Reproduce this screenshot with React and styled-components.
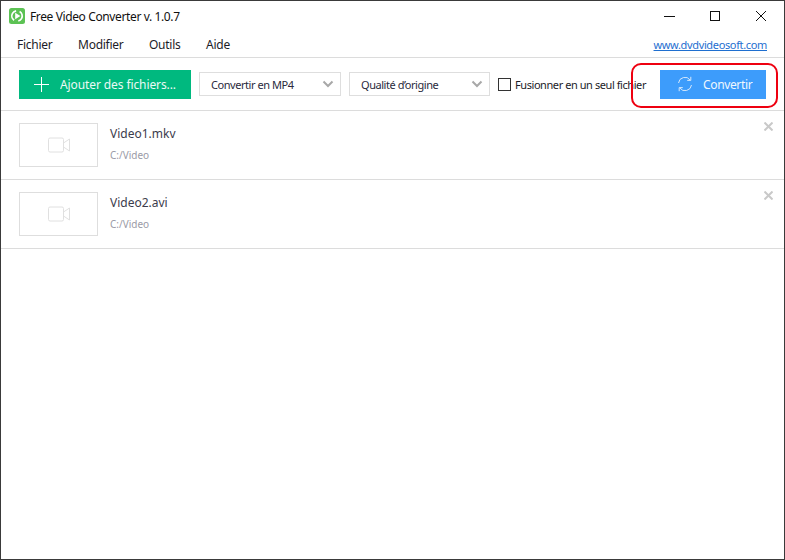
import React from 'react';
import styled, { createGlobalStyle } from 'styled-components';

const GlobalStyle = createGlobalStyle`
  html, body {
    margin: 0;
    padding: 0;
    background: #fff;
  }
  body {
    font-family: "Noto Sans", "Open Sans", sans-serif;
  }
`;

const Window = styled.div`
  position: relative;
  box-sizing: border-box;
  width: 785px;
  height: 560px;
  border: 1px solid #3a3a3a;
  background: #fff;
  overflow: hidden;
`;

const TitleBar = styled.div`
  display: flex;
  align-items: center;
  height: 30px;
  padding-left: 8px;
`;

const AppName = styled.span`
  margin-left: 5px;
  font-size: 12px;
  letter-spacing: -0.38px;
  color: #111;
`;

const WindowButtons = styled.div`
  display: flex;
  margin-left: auto;
`;

const WindowButton = styled.div`
  display: flex;
  align-items: center;
  justify-content: center;
  width: 46px;
  height: 30px;
`;

const MenuBar = styled.div`
  display: flex;
  align-items: center;
  height: 26px;
  padding: 0 17px 0 16px;
  border-bottom: 1px solid #dcdcdc;
`;

const MenuItem = styled.span`
  width: ${p => p.$width}px;
  font-size: 12px;
  letter-spacing: -0.25px;
  color: #1c1c28;
`;

const SiteLink = styled.a`
  margin-left: auto;
  font-size: 11px;
  letter-spacing: -0.35px;
  color: #1f6fd0;
  text-decoration: underline;
`;

const Toolbar = styled.div`
  display: flex;
  align-items: center;
  height: 52px;
  padding: 0 18px;
  border-bottom: 1px solid #dcdcdc;
`;

const ActionButton = styled.div`
  display: flex;
  align-items: center;
  box-sizing: border-box;
  width: ${p => p.$width}px;
  height: 29px;
  padding-left: ${p => p.$pad}px;
  background: ${p => p.$color};
  color: #fff;
  font-size: 12px;
`;

const ButtonLabel = styled.span`
  margin-left: ${p => p.$gap}px;
  letter-spacing: ${p => p.$tight}px;
  opacity: 0.92;
`;

const SelectBox = styled.div`
  display: flex;
  align-items: center;
  justify-content: space-between;
  box-sizing: border-box;
  width: ${p => p.$width}px;
  height: 24px;
  margin-left: 8px;
  padding: 0 6px 0 11px;
  border: 1px solid #dedede;
  font-size: 11px;
  letter-spacing: -0.45px;
  color: #2a2a3c;
`;

const CheckRow = styled.label`
  display: flex;
  align-items: center;
  flex: 1;
  margin-left: 8px;
  font-size: 11px;
  letter-spacing: -0.43px;
  color: #1c1c28;
  white-space: nowrap;
`;

const CheckSquare = styled.span`
  box-sizing: border-box;
  width: 13px;
  height: 13px;
  margin-right: 4px;
  border: 1px solid #333;
`;

const FileRow = styled.div`
  position: relative;
  display: flex;
  align-items: flex-start;
  box-sizing: border-box;
  height: 69px;
  padding: 12px 0 0 18px;
  border-bottom: 1px solid #dcdcdc;
`;

const Thumb = styled.div`
  display: flex;
  align-items: center;
  justify-content: center;
  box-sizing: border-box;
  width: 79px;
  height: 44px;
  border: 1px solid #dedede;
`;

const FileInfo = styled.div`
  display: flex;
  flex-direction: column;
  margin-left: 12px;
  padding-top: 1px;
`;

const FileName = styled.div`
  height: 20px;
  font-size: 12px;
  line-height: 20px;
  color: #3c3c4c;
`;

const FilePath = styled.div`
  font-size: 10px;
  line-height: 22px;
  color: #9a9aa6;
`;

const RemoveButton = styled.div`
  position: absolute;
  top: 11px;
  right: 11px;
  display: flex;
`;

const Highlight = styled.div`
  position: absolute;
  left: 630px;
  top: 62px;
  box-sizing: border-box;
  width: 147px;
  height: 45px;
  border: 2px solid #ee0010;
  border-radius: 10px;
  pointer-events: none;
`;

const AppLogo = () => (
  <svg width="16" height="16" viewBox="0 0 16 16">
    <rect width="16" height="16" rx="2.5" fill="#5cc254" />
    <circle cx="8" cy="8" r="5.2" fill="none" stroke="#fff" strokeWidth="1.7" strokeDasharray="12 4.3" transform="rotate(-60 8 8)" />
    <path d="M6.2 4.8 L11.4 8 L6.2 11.2 Z" fill="#fff" />
  </svg>
);

const Chevron = () => (
  <svg width="12" height="8" viewBox="0 0 12 8">
    <path d="M1.5 1.5 L6 6 L10.5 1.5" fill="none" stroke="#a8a8a8" strokeWidth="2" />
  </svg>
);

const CameraIcon = () => (
  <svg width="22" height="16" viewBox="0 0 22 16" fill="none" stroke="#e0e0e0" strokeWidth="1">
    <rect x="0.5" y="1" width="15" height="14" rx="1.5" />
    <path d="M15.5 6 L21.5 2 V14 L15.5 10" />
  </svg>
);

const SyncIcon = () => (
  <svg width="16" height="16" viewBox="0 0 16 16" fill="none" stroke="#d5e8fb" strokeWidth="1">
    <path d="M1.5 7 A6.5 6.5 0 0 1 13.2 4" />
    <path d="M13.8 0.8 V4.4 H10.2" />
    <path d="M14.5 9 A6.5 6.5 0 0 1 2.8 12" />
    <path d="M2.2 15.2 V11.6 H5.8" />
  </svg>
);

const PlusIcon = () => (
  <svg width="15" height="15" viewBox="0 0 15 15" stroke="#fff" strokeWidth="1">
    <path d="M7.5 0 V15 M0 7.5 H15" />
  </svg>
);

const CloseMark = () => (
  <svg width="9" height="9" viewBox="0 0 9 9" stroke="#c9c9c9" strokeWidth="2">
    <path d="M0.5 0.5 L8.5 8.5 M8.5 0.5 L0.5 8.5" />
  </svg>
);

const files = [
  { name: 'Video1.mkv', path: 'C:/Video' },
  { name: 'Video2.avi', path: 'C:/Video' },
];

const App = () => (
  <>
    <GlobalStyle />
    <Window>
      <TitleBar>
        <AppLogo />
        <AppName>Free Video Converter v. 1.0.7</AppName>
        <WindowButtons>
          <WindowButton>
            <svg width="11" height="10" viewBox="0 0 11 10" stroke="#111"><path d="M0 5.5 H11" /></svg>
          </WindowButton>
          <WindowButton>
            <svg width="10" height="10" viewBox="0 0 10 10" fill="none" stroke="#111"><rect x="0.5" y="0.5" width="9" height="9" /></svg>
          </WindowButton>
          <WindowButton>
            <svg width="10" height="10" viewBox="0 0 10 10" stroke="#111"><path d="M0 0 L10 10 M10 0 L0 10" /></svg>
          </WindowButton>
        </WindowButtons>
      </TitleBar>
      <MenuBar>
        <MenuItem $width={61}>Fichier</MenuItem>
        <MenuItem $width={71}>Modifier</MenuItem>
        <MenuItem $width={57}>Outils</MenuItem>
        <MenuItem $width={40}>Aide</MenuItem>
        <SiteLink>www.dvdvideosoft.com</SiteLink>
      </MenuBar>
      <Toolbar>
        <ActionButton $width={172} $color="#00b97f" $pad={15}>
          <PlusIcon />
          <ButtonLabel $gap={11} $tight={-0.1}>Ajouter des fichiers...</ButtonLabel>
        </ActionButton>
        <SelectBox $width={142}>Convertir en MP4<Chevron /></SelectBox>
        <SelectBox $width={141}>Qualité d’origine<Chevron /></SelectBox>
        <CheckRow><CheckSquare />Fusionner en un seul fichier</CheckRow>
        <ActionButton $width={106} $color="#3d9cfb" $pad={17}>
          <SyncIcon />
          <ButtonLabel $gap={10} $tight={-0.35}>Convertir</ButtonLabel>
        </ActionButton>
      </Toolbar>
      {files.map(file => (
        <FileRow key={file.name}>
          <Thumb><CameraIcon /></Thumb>
          <FileInfo>
            <FileName>{file.name}</FileName>
            <FilePath>{file.path}</FilePath>
          </FileInfo>
          <RemoveButton><CloseMark /></RemoveButton>
        </FileRow>
      ))}
      <Highlight />
    </Window>
  </>
);

export default App;
